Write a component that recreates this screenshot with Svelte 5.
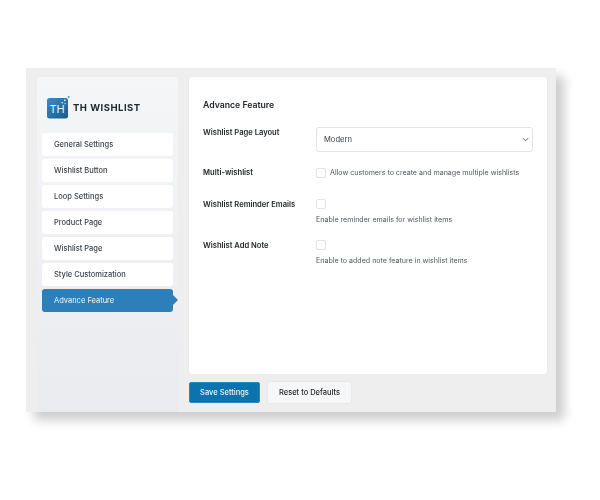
<script>
  const items = ['General Settings','Wishlist Button','Loop Settings','Product Page','Wishlist Page','Style Customization','Advance Feature'];
  const active = 'Advance Feature';
  const rows = [
    { label: 'Multi-wishlist', text: 'Allow customers to create and manage multiple wishlists', inline: true },
    { label: 'Wishlist Reminder Emails', text: 'Enable reminder emails for wishlist items' },
    { label: 'Wishlist Add Note', text: 'Enable to added note feature in wishlist items' }
  ];
</script>

<div class="page">
  <div class="panel">
    <aside class="sidebar">
      <div class="brand">
        <svg class="logo" viewBox="0 0 23 23" width="23" height="23" aria-hidden="true">
          <defs>
            <linearGradient id="lg" x1="0" y1="0" x2="1" y2="1">
              <stop offset="0" stop-color="#3a8ccb"/>
              <stop offset="1" stop-color="#175a8c"/>
            </linearGradient>
          </defs>
          <rect x="0" y="2" width="21" height="20.5" rx="2.5" fill="url(#lg)"/>
          <rect x="20.6" y="0" width="2.2" height="2.2" rx="1.1" fill="#4aa3dc"/>
          <rect x="17" y="3.5" width="1.6" height="1.6" fill="#d5e8f5"/>
          <rect x="14.5" y="6" width="1.4" height="1.4" fill="#d5e8f5"/>
          <rect x="17.5" y="7" width="1.2" height="1.2" fill="#d5e8f5"/>
          <text x="2.6" y="17" class="logo-text">TH</text>
        </svg>
        <span class="brand-name">TH WISHLIST</span>
      </div>
      <nav class="nav">
        {#each items as item}
          <div class="nav-item" class:active={item === active}>{item}</div>
        {/each}
      </nav>
    </aside>

    <div class="content">
      <section class="card">
        <h2>Advance Feature</h2>
        <div class="row first">
          <div class="label">Wishlist Page Layout</div>
          <div class="select-wrap">
            <select class="select"><option>Modern</option></select>
            <svg class="chev" viewBox="0 0 8 5" width="7" height="5" aria-hidden="true"><path d="M1 1l3 3 3-3" fill="none" stroke="#50575e" stroke-width="1.1"/></svg>
          </div>
        </div>
        {#each rows as r}
          <div class="row" class:single={r.inline}>
            <div class="label">{r.label}</div>
            <div class="control" class:inline={r.inline}>
              <input type="checkbox" class="check" />
              <span class="desc">{r.text}</span>
            </div>
          </div>
        {/each}
      </section>
      <div class="actions">
        <button class="btn primary">Save Settings</button>
        <button class="btn secondary">Reset to Defaults</button>
      </div>
    </div>
  </div>
</div>

<style>
  :global(body) { margin: 0; background: #fff; }
  .page {
    width: 600px; height: 500px; box-sizing: border-box;
    padding: 68px 44px 88px 26px;
    font-family: Inter, "Liberation Sans", sans-serif;
    filter: blur(0.3px);
  }
  .panel {
    display: flex; height: 344px; background: #eeeeee;
    padding: 9px 9px 0 11px; box-sizing: border-box; gap: 11px;
    box-shadow: 8px 8px 10px rgba(0,0,0,.2);
  }
  .sidebar {
    width: 141px; flex: none; box-sizing: border-box; padding: 0 5px;
    border-radius: 4px 4px 0 0;
    background: linear-gradient(#f5f6f8, #e9ebee);
  }
  .brand { display: flex; align-items: center; gap: 3px; height: 56px; padding: 4px 0 0 5px; box-sizing: border-box; }
  .logo { flex: none; }
  .logo-text { font: 400 11px Inter, sans-serif; fill: #eaf4fb; letter-spacing: -.3px; }
  .brand-name { font-size: 9.5px; font-weight: 700; color: #23282d; letter-spacing: .5px; }
  .nav { display: flex; flex-direction: column; gap: 3px; }
  .nav-item {
    position: relative; height: 23px; line-height: 23px; padding-left: 12px;
    background: #fff; border-radius: 3px; font-size: 7.5px; font-weight: 500; color: #3c434a;
  }
  .nav-item.active { background: #2c7fb8; color: #f2f8fc; font-weight: 400; }
  .nav-item.active::after {
    content: ""; position: absolute; left: 100%; top: 6px;
    border-left: 5px solid #2c7fb8; border-top: 5.5px solid transparent; border-bottom: 5.5px solid transparent;
  }
  .content { flex: 1; min-width: 0; }
  .card {
    height: 297px; box-sizing: border-box; background: #fff; border-radius: 3px;
    padding: 22px 14px 0; box-shadow: 0 0 2px rgba(0,0,0,.06);
  }
  h2 { margin: 0 0 16px; font-size: 8.7px; line-height: 12px; font-weight: 600; color: #23282d; }
  .row { display: grid; grid-template-columns: 113px 1fr; margin-bottom: 15px; }
  .row.first { margin-bottom: 15px; }
  .row.single { margin-bottom: 21px; }
  .label { font-size: 7.6px; line-height: 11px; font-weight: 600; color: #23282d; }
  .select-wrap { position: relative; }
  .select {
    appearance: none; display: block; width: 217px; height: 25px; box-sizing: border-box;
    border: 1px solid #e3e3e3; border-radius: 3px; background: #fff;
    font: 400 7.6px Inter, sans-serif; color: #3c434a; padding: 0 7px;
  }
  .chev { position: absolute; left: 206px; top: 10px; }
  .control { display: flex; flex-direction: column; align-items: flex-start; gap: 5px; }
  .control.inline { flex-direction: row; align-items: center; gap: 4px; }
  .check {
    appearance: none; width: 10px; height: 10px; margin: 0; box-sizing: border-box;
    border: 1px solid #e2e2e4; border-radius: 2px; background: #fff;
  }
  .desc { font-size: 7.08px; line-height: 11px; color: #50575e; white-space: nowrap; }
  .actions { display: flex; gap: 8px; margin-top: 8px; }
  .btn { height: 21px; padding: 0; border-radius: 2px; font: 500 7.5px Inter, sans-serif; box-sizing: border-box; }
  .primary { width: 71px; background: #0b73ad; color: #eaf4fb; border: 1px solid #2c86b8; }
  .secondary { width: 83px; background: #f6f7f9; color: #23282d; border: none; box-shadow: 0 0 2px rgba(0,0,0,.08); }
</style>
